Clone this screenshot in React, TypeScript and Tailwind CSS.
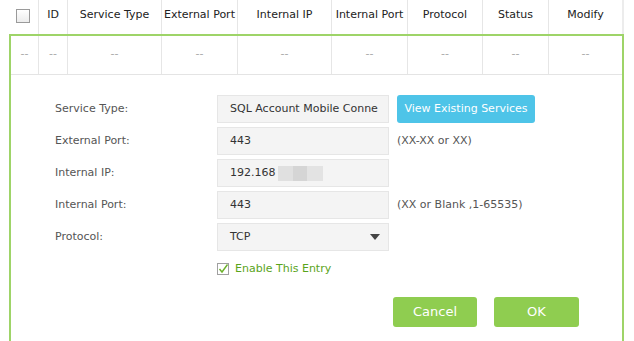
const columns = [
  { label: "", width: 39 },
  { label: "ID", width: 29 },
  { label: "Service Type", width: 94 },
  { label: "External Port", width: 76 },
  { label: "Internal IP", width: 94 },
  { label: "Internal Port", width: 76 },
  { label: "Protocol", width: 75 },
  { label: "Status", width: 66 },
  { label: "Modify", width: 73 },
];

function Field({ label, children, hint }: { label: string; children: React.ReactNode; hint?: React.ReactNode }) {
  return (
    <div className="flex items-center h-[28px]">
      <div className="w-[162px] text-[#555]">{label}</div>
      <div className="w-[172px] h-[28px] bg-[#f4f4f4] border border-[#e6e6e6] flex items-center pl-[12px] pr-[8px] text-[#333] whitespace-nowrap">
        {children}
      </div>
      {hint && <div className="ml-[8px] text-[#555]">{hint}</div>}
    </div>
  );
}

export default function App() {
  return (
    <div className="w-[634px] h-[341px] bg-white overflow-hidden text-[11px] font-['DejaVu_Sans',sans-serif]">
      {/* table header */}
      <div className="flex h-[34px] w-[624px] border-r-2 border-[#ececec]">
        {columns.map((c, i) => (
          <div
            key={i}
            style={{ width: c.width }}
            className="flex items-center justify-center pb-[3px] border-r border-[#e6e6e6] last:border-r-0 text-[#222] whitespace-nowrap"
          >
            {i === 0 ? (
              <span className="w-[14px] h-[14px] border border-[#9a9a9a] bg-gradient-to-b from-white to-[#ececec] ml-[8px]" />
            ) : (
              c.label
            )}
          </div>
        ))}
      </div>

      {/* green edit panel */}
      <div className="ml-[9px] w-[615px] h-[320px] border-2 border-b-0 border-[#9ed468]">
        <div className="flex h-[39px] border-b border-[#e4e4e4]">
          {columns.map((c, i) => (
            <div
              key={i}
              style={{ width: i === 0 ? c.width - 11 : c.width }}
              className="flex items-center justify-center pb-[2px] border-r border-[#e6e6e6] last:border-r-0 text-[#aaa]"
            >
              --
            </div>
          ))}
        </div>

        <div className="pl-[44px] pr-[43px] pt-[20px]">
          <div className="flex flex-col gap-[4px]">
            <Field
              label="Service Type:"
              hint={
                <button className="h-[28px] w-[138px] rounded-[3px] bg-[#4ec4e8] text-white text-[11px]">
                  View Existing Services
                </button>
              }
            >
              <span className="block w-[152px] overflow-hidden">SQL Account Mobile Conne</span>
            </Field>
            <Field label="External Port:" hint="(XX-XX or XX)">443</Field>
            <Field label="Internal IP:">
              <span>192.168</span>
              <span className="ml-[2px] w-[15px] h-[15px] bg-[#e0e0e0]" />
              <span className="w-[14px] h-[15px] bg-[#d5d5d5]" />
              <span className="w-[16px] h-[15px] bg-[#e3e3e3]" />
            </Field>
            <Field label="Internal Port:" hint="(XX or Blank ,1-65535)">443</Field>
            <Field label="Protocol:">
              <span className="flex-1">TCP</span>
              <svg width="10" height="6" viewBox="0 0 10 6">
                <path d="M0 0 L10 0 L5 6 Z" fill="#444" />
              </svg>
            </Field>
          </div>

          <div className="flex items-center ml-[162px] mt-[11px] h-[14px] gap-[6px]">
            <svg width="12" height="12" viewBox="0 0 12 12">
              <rect x="0.5" y="0.5" width="11" height="11" fill="#fff" stroke="#a0a0a0" />
              <path d="M2.5 6 L5 9 L10.5 1.5" fill="none" stroke="#6cb22a" strokeWidth="1.4" />
            </svg>
            <span className="text-[#5aa41a]">Enable This Entry</span>
          </div>

          <div className="flex justify-end gap-[17px] mt-[21px]">
            <button className="w-[84px] h-[30px] rounded-[3px] bg-[#8fcd50] text-white text-[13px]">Cancel</button>
            <button className="w-[85px] h-[30px] rounded-[3px] bg-[#8fcd50] text-white text-[13px]">OK</button>
          </div>
        </div>
      </div>
    </div>
  );
}
